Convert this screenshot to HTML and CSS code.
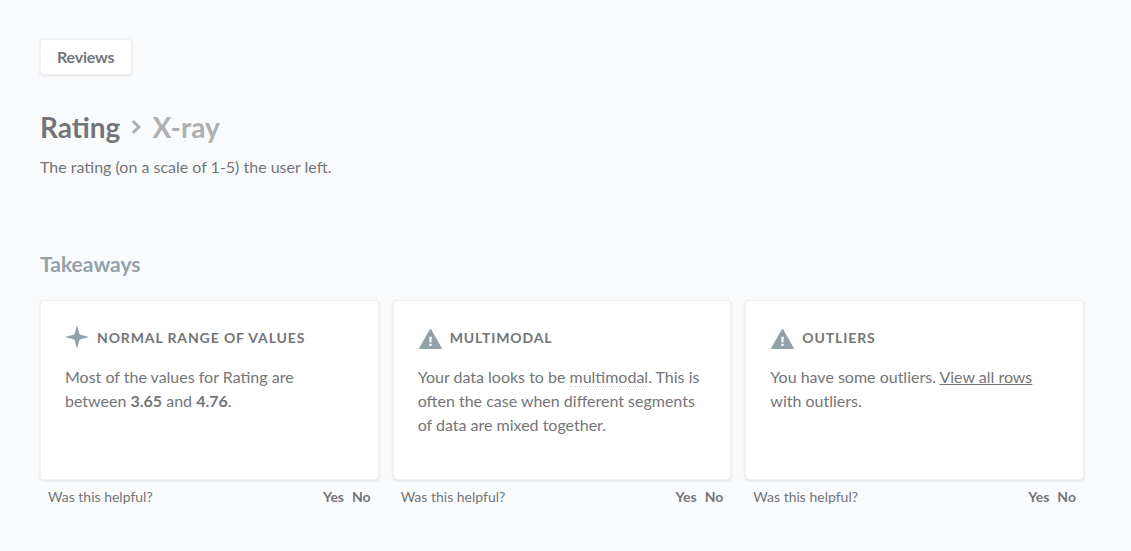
FILE: index.html
```html
<!DOCTYPE html>
<html lang="en">
<head>
<meta charset="utf-8">
<title>Rating X-ray</title>
<link rel="stylesheet" href="styles.css">
</head>
<body>
<main class="page">
  <a class="table-link">Reviews</a>
  <h1 class="title">
    <span>Rating</span>
    <svg class="chevron" viewBox="0 0 12 16" width="12" height="16"><path d="M2.800 2 8.800 8 2.800 14" fill="none" stroke="currentColor" stroke-width="3"/></svg>
    <span class="muted">X-ray</span>
  </h1>
  <p class="description">The rating (on a scale of 1-5) the user left.</p>
  <h2 class="section-title">Takeaways</h2>
  <div class="insights">
    <section>
      <div class="card">
        <header class="card-head">
          <svg class="icon star" viewBox="0 0 24 24"><path d="M12 0 14.200 8.300Q14.500 9.500 15.700 9.800L24 12 15.700 14.200Q14.500 14.500 14.200 15.700L12 24 9.800 15.700Q9.500 14.500 8.300 14.200L0 12 8.300 9.800Q9.500 9.500 9.800 8.300Z"/></svg>
          <span>Normal range of values</span>
        </header>
        <p class="card-text">Most of the values for Rating are between <b>3.65</b> and <b>4.76</b>.</p>
      </div>
      <footer class="feedback"><span>Was this helpful?</span><b class="yes">Yes</b><b>No</b></footer>
    </section>
    <section>
      <div class="card">
        <header class="card-head">
          <svg class="icon" viewBox="0 0 24 24"><path d="M12.500 2Q13 2 13.300 2.600L23.800 21Q24.300 22 23.300 22H1.700Q.7 22 1.200 21L11.700 2.600Q12 2 12.500 2Z"/><path class="mark" d="M11.300 9.800h2.400l-.3 5.700h-1.800zM11.400 16.800h2.200v2.200h-2.200z"/></svg>
          <span>Multimodal</span>
        </header>
        <p class="card-text">Your data looks to be <span class="term">multimodal</span>. This is often the case when different segments of data are mixed together.</p>
      </div>
      <footer class="feedback"><span>Was this helpful?</span><b class="yes">Yes</b><b>No</b></footer>
    </section>
    <section>
      <div class="card">
        <header class="card-head">
          <svg class="icon" viewBox="0 0 24 24"><path d="M12.500 2Q13 2 13.300 2.600L23.800 21Q24.300 22 23.300 22H1.700Q.7 22 1.200 21L11.700 2.600Q12 2 12.500 2Z"/><path class="mark" d="M11.300 9.800h2.400l-.3 5.700h-1.800zM11.400 16.800h2.200v2.200h-2.200z"/></svg>
          <span>Outliers</span>
        </header>
        <p class="card-text">You have some outliers. <a class="link">View all rows</a> with outliers.</p>
      </div>
      <footer class="feedback"><span>Was this helpful?</span><b class="yes">Yes</b><b>No</b></footer>
    </section>
  </div>
</main>
</body>
</html>
```
FILE: styles.css
```css
* { box-sizing: border-box; }
body {
  margin: 0;
  background: #fafbfd;
  color: #747578;
  font-family: Lato, "Liberation Sans", sans-serif;
  font-size: 16px;
}
.page { padding: 39px 47px 0 40px; }
.table-link {
  display: block;
  width: 92px;
  height: 36px;
  padding-left: 16px;
  border: 1px solid #f0f0f1;
  border-radius: 4px;
  background: #fff;
  box-shadow: 0 1px 3px rgba(0, 0, 0, 0.11);
  font-weight: 700;
  letter-spacing: -0.2px;
  line-height: 33px;
}
.title {
  display: flex;
  align-items: center;
  margin: 34px 0 0;
  height: 36px;
  font-size: 28px;
  line-height: 36px;
}
.chevron { margin: 0 10px 0 10px; color: #aeafb0; }
.muted { color: #aeafb0; }
.description { margin: 10px 0 0; line-height: 24px; }
.section-title {
  margin: 71px 0 0;
  color: #93a1ab;
  font-size: 21px;
  line-height: 28px;
}
.insights {
  display: grid;
  grid-template-columns: repeat(3, 1fr);
  gap: 14px;
  margin-top: 22px;
}
.card {
  height: 180px;
  padding: 24px;
  border: 1px solid #f0f0f1;
  border-radius: 4px;
  background: #fff;
  box-shadow: 0 1px 3px rgba(0, 0, 0, 0.11);
}
.card-head {
  display: flex;
  align-items: center;
  gap: 8px;
  height: 26px;
  font-size: 14px;
  font-weight: 700;
  letter-spacing: 0.88px;
  line-height: 16px;
  text-transform: uppercase;
}
.icon { width: 24px; height: 24px; margin-top: 2px; fill: #93a1ab; }
.star { margin-top: -2px; }
.mark { fill: #fff; }
.card-text { margin: 14px 0 0; line-height: 24px; }
.term { border-bottom: 1px dotted #d2d5d7; }
.link { text-decoration: underline; }
.feedback {
  display: flex;
  padding: 8px 8px 0;
  font-size: 14px;
  line-height: 18px;
}
.yes { margin: 0 8px 0 auto; }
```
